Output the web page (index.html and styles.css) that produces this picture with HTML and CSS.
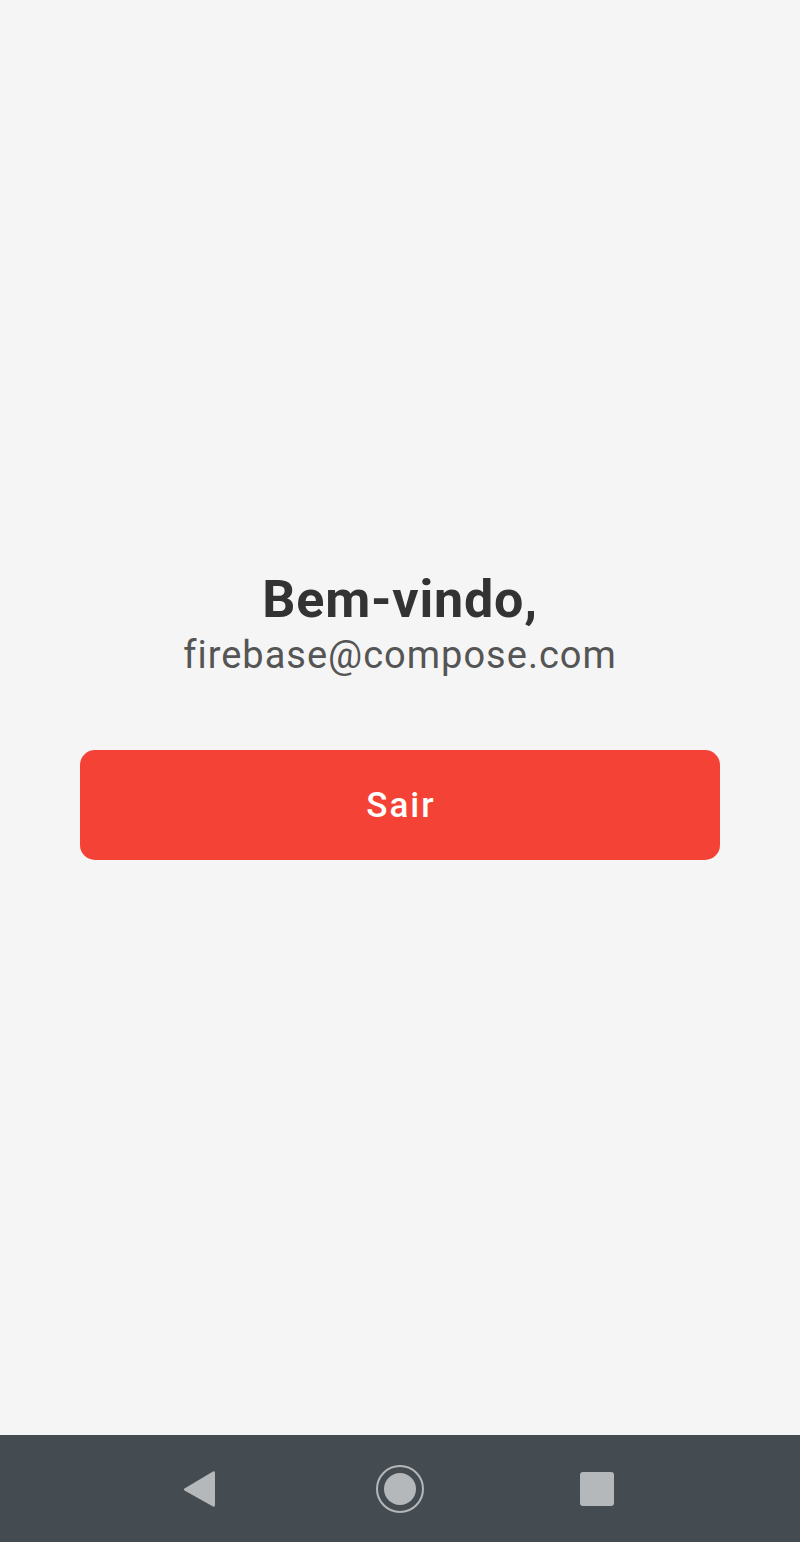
FILE: index.html
```html
<!DOCTYPE html>
<html lang="pt">
<head>
<meta charset="utf-8">
<title>Home</title>
<link rel="stylesheet" href="styles.css">
</head>
<body>
<div class="screen">
  <main class="content">
    <div class="greeting">
      <h1 class="title">Bem-vindo,</h1>
      <p class="email">firebase@compose.com</p>
    </div>
    <button class="logout" type="button">Sair</button>
  </main>
  <nav class="navbar">
    <svg class="nav-icon nav-back" width="34" height="38" viewBox="0 0 34 38">
      <path d="M31 1.5 Q33 0.8 33 3 L33 35 Q33 37.2 31 36.5 L2.5 20.5 Q1 19.5 2.5 18.5 Z" fill="#b5b8ba"/>
    </svg>
    <svg class="nav-icon nav-home" width="50" height="50" viewBox="0 0 50 50">
      <circle cx="25" cy="25" r="23" fill="none" stroke="#b5b8ba" stroke-width="2"/>
      <circle cx="25" cy="25" r="16" fill="#b5b8ba"/>
    </svg>
    <svg class="nav-icon nav-recent" width="34" height="34" viewBox="0 0 34 34">
      <rect x="0" y="0" width="34" height="34" rx="3" fill="#b5b8ba"/>
    </svg>
  </nav>
</div>
</body>
</html>
```
FILE: styles.css
```css
* { box-sizing: border-box; }
html, body {
  margin: 0;
  padding: 0;
  height: 100%;
}
body {
  background: #f5f5f5;
  font-family: Roboto, "Liberation Sans", sans-serif;
}
.screen {
  display: flex;
  flex-direction: column;
  height: 1542px;
}
.content {
  flex: 1;
  display: flex;
  flex-direction: column;
  align-items: center;
  justify-content: center;
  padding: 0 80px;
}
.greeting {
  display: flex;
  flex-direction: column;
  align-items: center;
}
.title {
  margin: 0;
  font-size: 52px;
  font-weight: 700;
  line-height: 50px;
  letter-spacing: 0.8px;
  color: #333333;
}
.email {
  margin: 0;
  font-size: 38px;
  font-weight: 400;
  line-height: 60px;
  letter-spacing: 1px;
  color: #555555;
}
.logout {
  margin-top: 65px;
  width: 100%;
  height: 110px;
  border: none;
  border-radius: 15px;
  background: #f44336;
  color: #ffffff;
  font-family: Roboto, "Liberation Sans", sans-serif;
  font-size: 35px;
  font-weight: 500;
  letter-spacing: 2px;
  padding: 0 0 0 2px;
}
.navbar {
  height: 107px;
  flex: none;
  background: #454c51;
  display: flex;
  align-items: center;
  justify-content: center;
  padding-right: 4px;
}
.nav-icon { display: block; }
.nav-back { margin-right: 159px; }
.nav-recent { margin-left: 155px; }
```
